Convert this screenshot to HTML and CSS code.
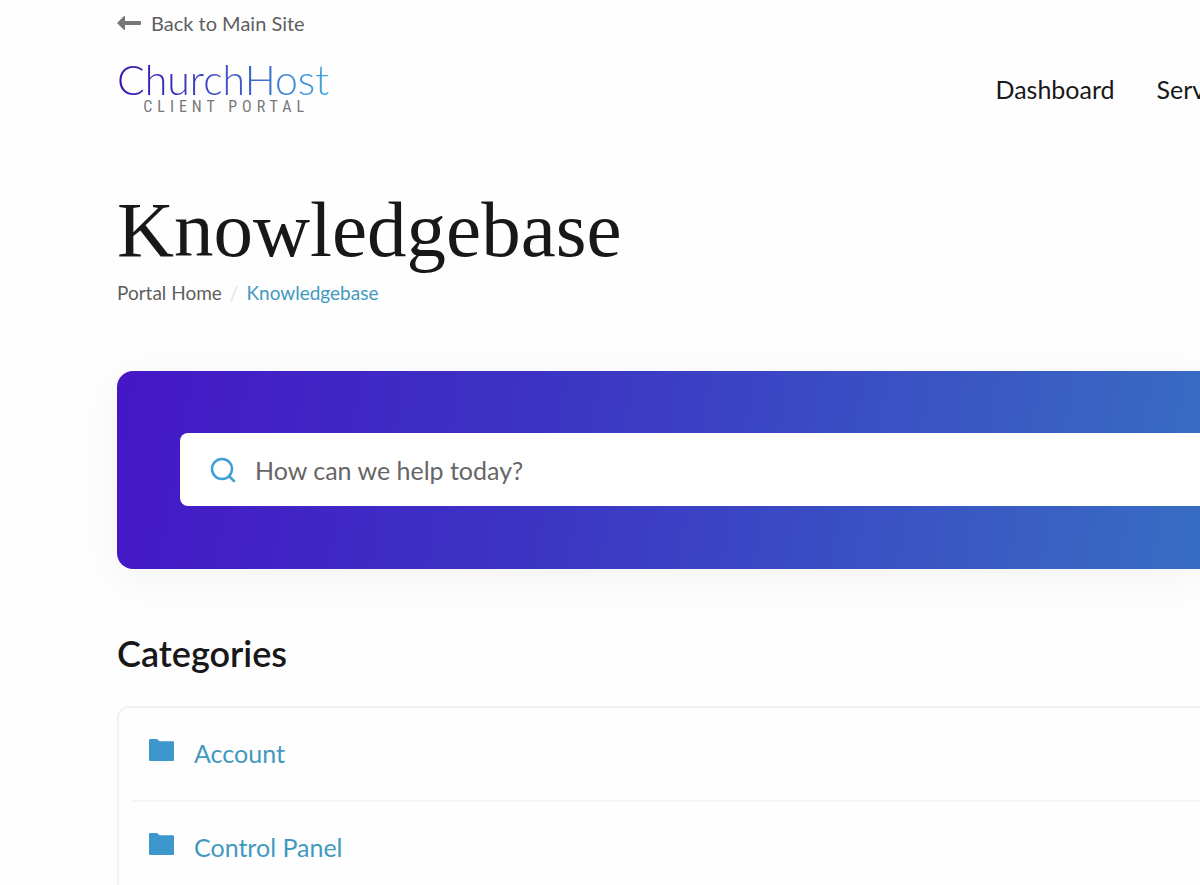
FILE: index.html
```
<!DOCTYPE html>
<html lang="en">
<head>
  <meta charset="utf-8">
  <title>Knowledgebase - ChurchHost Client Portal</title>
  <meta name="viewport" content="width=device-width, initial-scale=1">
  <link rel="stylesheet" href="styles.css">
</head>
<body>
  <div class="page">
    <header>
      <a class="back-link" href="#">
        <svg width="24" height="14" viewBox="0 0 24 14" aria-hidden="true">
          <path d="M0 7L7 0Q8 0 8 1V5H23Q24 5 24 6V8Q24 9 23 9H8V13Q8 14 7 14Z" fill="currentColor"/>
        </svg>
        Back to Main Site
      </a>
      <div class="navbar">
        <a class="logo" href="#">
          <span class="logo-name">ChurchHost</span>
          <span class="logo-sub">CLIENT PORTAL</span>
        </a>
        <nav class="nav">
          <a href="#">Dashboard</a>
          <a href="#">Services</a>
        </nav>
      </div>
    </header>

    <main>
      <h1>Knowledgebase</h1>
      <ol class="breadcrumb">
        <li><a href="#">Portal Home</a></li>
        <li class="active">Knowledgebase</li>
      </ol>

      <form class="search" role="search">
        <div class="search-box">
          <svg width="26" height="26" viewBox="0 0 26 26" fill="none" stroke="currentColor" stroke-width="2.500" aria-hidden="true">
            <circle cx="12" cy="12" r="10"/>
            <path d="M19 19L24 24" stroke-linecap="round"/>
          </svg>
          <input type="search" name="q" placeholder="How can we help today?" aria-label="How can we help today?">
        </div>
      </form>

      <h2>Categories</h2>
      <ul class="categories">
        <li>
          <a href="#">
            <svg width="25" height="22" viewBox="0 0 24 21" aria-hidden="true">
              <path d="M0 1Q0 0 1 0H7Q8 0 9 1L10 2H23Q24 2 24 3V20Q24 21 23 21H1Q0 21 0 20Z" fill="currentColor"/>
            </svg>
            <span>Account</span>
          </a>
        </li>
        <li>
          <a href="#">
            <svg width="25" height="22" viewBox="0 0 24 21" aria-hidden="true">
              <path d="M0 1Q0 0 1 0H7Q8 0 9 1L10 2H23Q24 2 24 3V20Q24 21 23 21H1Q0 21 0 20Z" fill="currentColor"/>
            </svg>
            <span>Control Panel</span>
          </a>
        </li>
      </ul>
    </main>
  </div>
</body>
</html>
```
FILE: styles.css
```
*, *:before, *:after {
  box-sizing: border-box;
}
body {
  margin: 0;
  background: #fefefe;
  color: #18181a;
  font-family: Lato, "Liberation Sans", sans-serif;
}
a {
  color: inherit;
  text-decoration: none;
}
.page {
  padding-left: 117px;
  overflow: hidden;
}
.back-link {
  display: flex;
  align-items: center;
  gap: 10px;
  padding-top: 10px;
  font-size: 20px;
  line-height: 26px;
  color: #5e5e60;
}
.back-link svg {
  color: #77777a;
}
.navbar {
  display: flex;
  justify-content: space-between;
  align-items: center;
  padding-top: 24px;
}
.logo {
  display: flex;
  flex-direction: column;
  align-items: center;
}
.logo-name {
  font-size: 41px;
  font-weight: 300;
  line-height: 40px;
  background: linear-gradient(90deg, #3a10b4, #3d4fc4 50%, #3aa6dc);
  -webkit-background-clip: text;
  background-clip: text;
  color: transparent;
}
.logo-sub {
  padding-left: 6px;
  font-family: "Liberation Sans Narrow", "Roboto Condensed", sans-serif;
  font-size: 16px;
  line-height: 14px;
  letter-spacing: 5px;
  color: #77777a;
}
.nav {
  display: flex;
  gap: 42px;
  margin-right: -47px;
  padding-top: 4px;
  font-size: 25px;
  line-height: 32px;
}
h1 {
  margin: 71px 0 0;
  font-family: "Liberation Serif", serif;
  font-size: 79px;
  font-weight: normal;
  line-height: 90px;
}
.breadcrumb {
  display: flex;
  margin: 5px 0 0;
  padding: 0;
  list-style: none;
  font-size: 19px;
  line-height: 26px;
  color: #5e5e60;
}
.breadcrumb li + li:before {
  content: "/";
  padding: 0 8px;
  color: #e2e2e4;
}
.breadcrumb .active {
  color: #4299bf;
}
.search {
  margin-top: 65px;
  padding: 62px 0 63px 63px;
  border-radius: 16px 0 0 16px;
  background: linear-gradient(100deg, #4517c6, #3c33c4 38%, #386dc3);
  box-shadow: 0 10px 50px rgba(0, 0, 0, .05);
}
.search-box {
  display: flex;
  align-items: center;
  gap: 19px;
  padding-left: 30px;
  border-radius: 8px 0 0 8px;
  background: #fff;
  color: #419fd6;
}
.search-box input {
  flex: 1;
  height: 73px;
  padding: 0;
  border: 0;
  outline: 0;
  background: none;
  font: inherit;
  font-size: 25px;
  color: #18181a;
}
.search-box input::placeholder {
  color: #666;
  opacity: 1;
}
h2 {
  margin: 63px 0 0;
  font-size: 36px;
  font-weight: 600;
  line-height: 42px;
}
.categories {
  margin: 32px 0 0;
  padding: 0 0 0 13px;
  list-style: none;
  border: 2px solid #f2f2f3;
  border-right: 0;
  border-radius: 12px 0 0 0;
}
.categories li + li {
  border-top: 2px solid #f4f4f6;
}
.categories a {
  display: flex;
  align-items: flex-start;
  gap: 20px;
  height: 92px;
  padding: 31px 0 0 17px;
  font-size: 25px;
  line-height: 28px;
  color: #4299bf;
}
.categories svg {
  color: #3e97cc;
}
```
